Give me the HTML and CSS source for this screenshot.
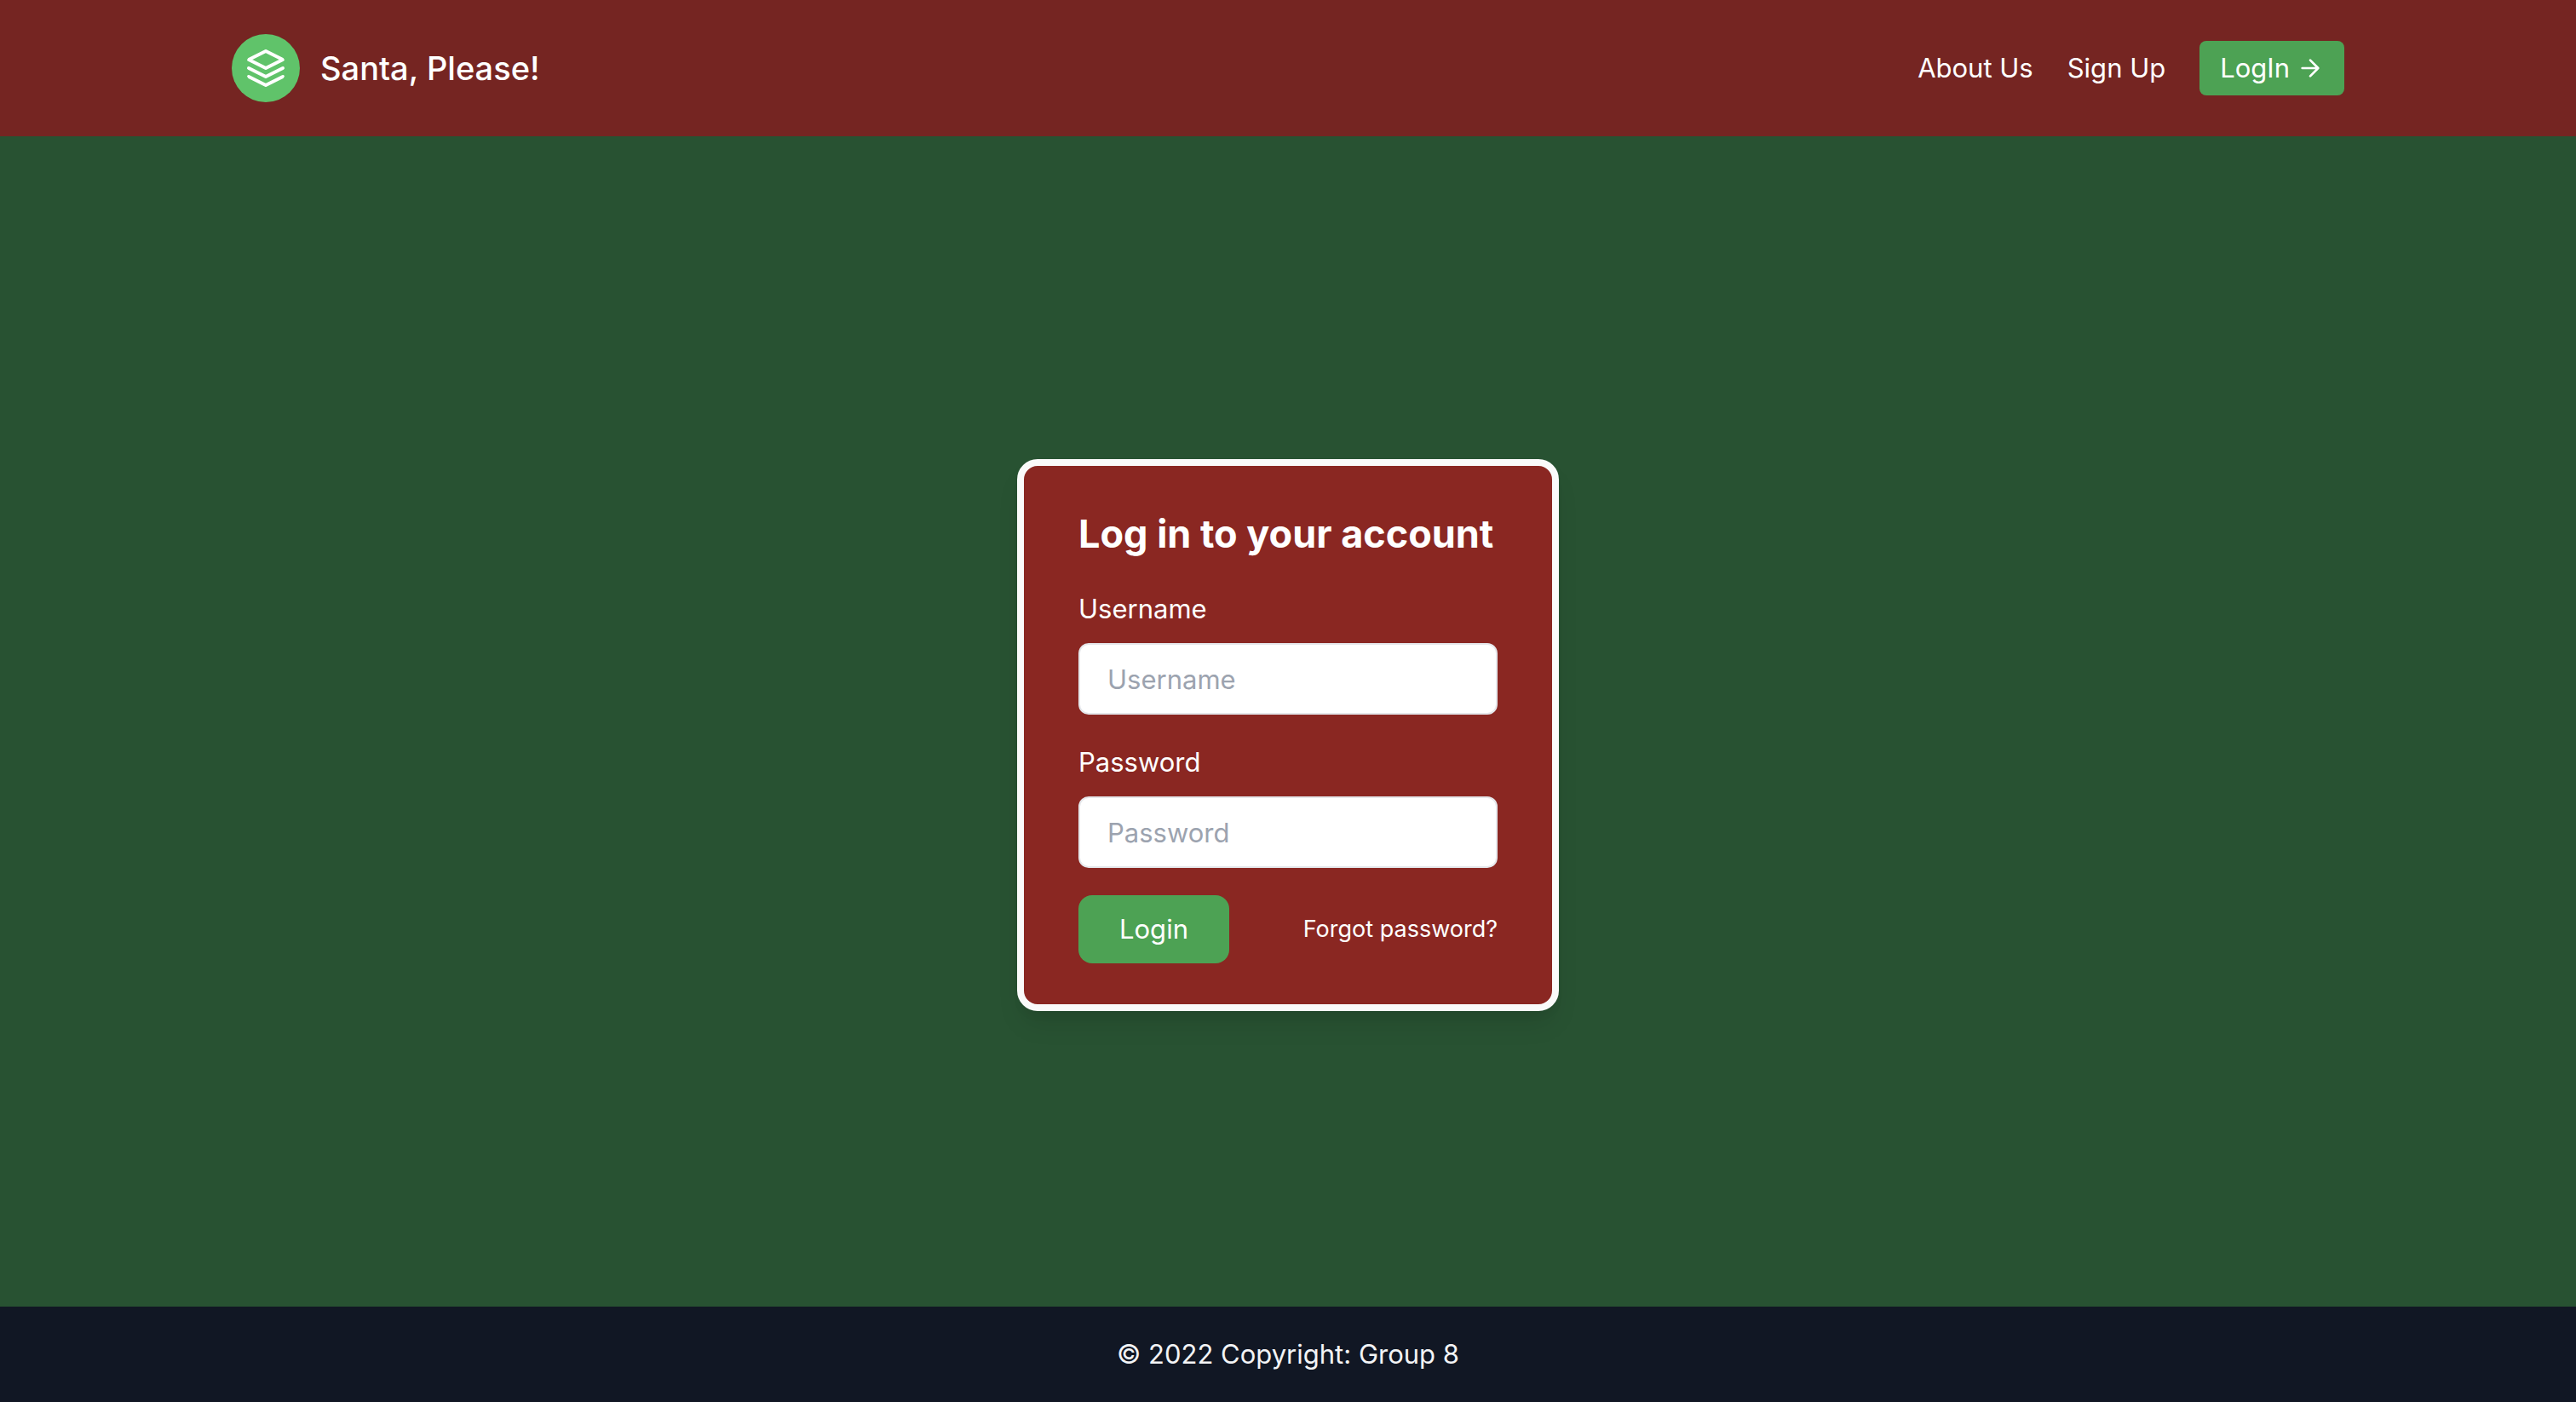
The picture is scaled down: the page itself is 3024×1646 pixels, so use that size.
FILE: index.html
```html
<!DOCTYPE html>
<html lang="en">
<head>
  <meta charset="utf-8">
  <meta name="viewport" content="width=device-width, initial-scale=1">
  <title>Santa, Please!</title>
  <link rel="stylesheet" href="styles.css">
</head>
<body>
  <header class="site-header">
    <div class="header-inner">
      <a class="brand" href="#">
        <svg class="brand-logo" viewBox="0 0 24 24" fill="none" stroke="currentColor" stroke-width="2" stroke-linecap="round" stroke-linejoin="round" aria-hidden="true">
          <path d="M12 2L2 7l10 5 10-5-10-5zM2 17l10 5 10-5M2 12l10 5 10-5"/>
        </svg>
        <span>Santa, Please!</span>
      </a>
      <nav class="nav">
        <a class="nav-link" href="#">About Us</a>
        <a class="nav-link" href="#">Sign Up</a>
        <button class="nav-button" type="button">LogIn
          <svg class="nav-arrow" viewBox="0 0 24 24" fill="none" stroke="currentColor" stroke-width="2" stroke-linecap="round" stroke-linejoin="round" aria-hidden="true">
            <path d="M5 12h14M12 5l7 7-7 7"/>
          </svg>
        </button>
      </nav>
    </div>
  </header>

  <main class="main">
    <form class="card">
      <h1 class="card-title">Log in to your account</h1>
      <div class="field">
        <label for="username">Username</label>
        <input id="username" type="text" placeholder="Username">
      </div>
      <div class="field">
        <label for="password">Password</label>
        <input id="password" type="password" placeholder="Password">
      </div>
      <div class="actions">
        <button class="submit" type="submit">Login</button>
        <a class="forgot" href="#">Forgot password?</a>
      </div>
    </form>
  </main>

  <footer class="site-footer">© 2022 Copyright: Group 8</footer>
</body>
</html>
```
FILE: styles.css
```css
*,
*::before,
*::after {
  box-sizing: border-box;
}

body {
  margin: 0;
  min-height: 100vh;
  display: flex;
  flex-direction: column;
  background: #285232;
  color: #ffffff;
  font-family: Inter, "Liberation Sans", sans-serif;
  font-size: 31px;
  line-height: 48px;
}

a {
  color: inherit;
  text-decoration: none;
}

button,
input {
  font: inherit;
}

.site-header {
  background: #752522;
}

.header-inner {
  max-width: 2560px;
  margin: 0 auto;
  padding: 40px;
  display: flex;
  align-items: center;
  justify-content: space-between;
}

.brand {
  display: flex;
  align-items: center;
  gap: 24px;
  font-size: 38px;
  font-weight: 500;
}

.brand-logo {
  width: 80px;
  height: 80px;
  padding: 16px;
  border-radius: 50%;
  background: #60c36a;
}

.nav {
  display: flex;
  align-items: center;
  gap: 40px;
}

.nav-button {
  display: flex;
  align-items: center;
  gap: 8px;
  padding: 8px 24px;
  border: 0;
  border-radius: 8px;
  background: #4da254;
  color: #ffffff;
}

.nav-arrow {
  width: 32px;
  height: 32px;
}

.main {
  flex: 1;
  display: flex;
  align-items: center;
  justify-content: center;
  padding-top: 32px;
}

.card {
  display: flex;
  flex-direction: column;
  gap: 32px;
  width: 636px;
  max-width: 100%;
  padding: 48px 64px;
  border: 8px solid #fafafa;
  border-radius: 24px;
  background: #8a2722;
  box-shadow: 0 20px 30px -6px rgba(0, 0, 0, 0.1), 0 8px 12px -4px rgba(0, 0, 0, 0.05);
}

.card-title {
  margin: 0;
  font-size: 45px;
  line-height: 64px;
  font-weight: 700;
}

.field {
  display: flex;
  flex-direction: column;
  gap: 16px;
}

.field input {
  width: 100%;
  height: 84px;
  padding: 16px 32px;
  border: 2px solid #e5e7eb;
  border-radius: 12px;
  background: #ffffff;
  color: #111724;
}

.field input::placeholder {
  color: #9ca3af;
  opacity: 1;
}

.actions {
  display: flex;
  align-items: center;
  justify-content: space-between;
}

.submit {
  padding: 16px 48px;
  border: 0;
  border-radius: 16px;
  background: #4da254;
  color: #ffffff;
}

.forgot {
  font-size: 27px;
  line-height: 40px;
}

.site-footer {
  padding: 32px;
  background: #111724;
  color: #f3f4f6;
  text-align: center;
}
```
